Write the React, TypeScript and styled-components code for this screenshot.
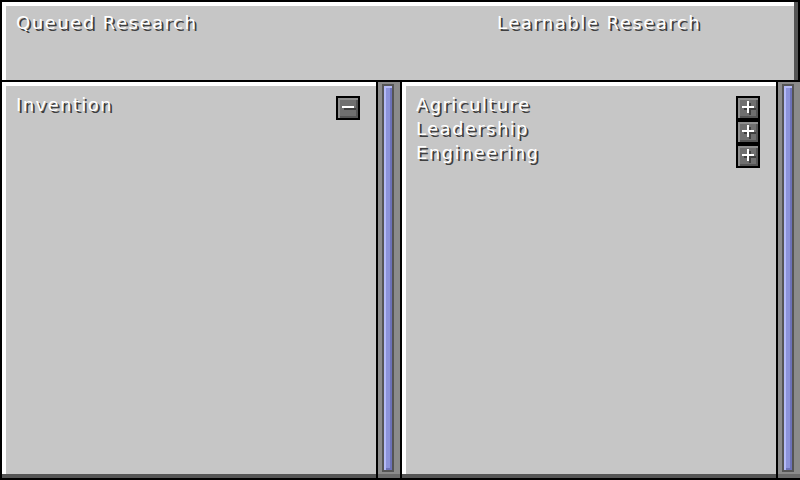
import styled, { createGlobalStyle } from "styled-components";

const GlobalStyle = createGlobalStyle`
  html, body {
    margin: 0;
    padding: 0;
    background: #000;
  }
  body {
    font-family: "DejaVu Sans", "Liberation Sans", sans-serif;
  }
`;

const Screen = styled.div`
  width: 800px;
  height: 480px;
  background: #000;
  display: flex;
  flex-direction: column;
  gap: 2px;
  overflow: hidden;
`;

const Header = styled.header`
  height: 80px;
  flex: none;
  box-sizing: border-box;
  display: grid;
  grid-template-columns: 384px 1fr;
  align-items: start;
  padding: 12px 0 0 14px;
  border: 2px solid #000;
  border-bottom: none;
  background: #c6c6c6;
  box-shadow: inset -4px 0 0 #555, inset 4px 4px 0 #fff;
`;

const Title = styled.h1<{ $align: "left" | "center" }>`
  margin: 0;
  font-size: 18px;
  line-height: 18px;
  font-weight: normal;
  letter-spacing: 1.5px;
  color: #fff;
  text-shadow: 2px 2px 0 #3f3f3f;
  text-align: ${(p) => p.$align};
`;

const Body = styled.div`
  flex: 1;
  min-height: 0;
  display: grid;
  grid-template-columns: 400px 400px;
`;

const Column = styled.section`
  display: flex;
  min-height: 0;
`;

const List = styled.ul`
  flex: 1;
  margin: 0;
  padding: 14px 16px 0 14px;
  list-style: none;
  display: flex;
  flex-direction: column;
  border-left: 2px solid #000;
  border-bottom: 2px solid #000;
  background: #c6c6c6;
  box-shadow: inset 0 -4px 0 #555, inset 4px 4px 0 #fff;
`;

const Row = styled.li`
  height: 24px;
  display: flex;
  align-items: flex-start;
  justify-content: space-between;
`;

const Label = styled.span`
  font-size: 18px;
  line-height: 18px;
  letter-spacing: 1.4px;
  color: #fff;
  text-shadow: 2px 2px 0 #3f3f3f;
  white-space: nowrap;
`;

const SquareButton = styled.button`
  width: 24px;
  height: 24px;
  flex: none;
  box-sizing: border-box;
  padding: 0 0 0 1px;
  margin: 0;
  border: 2px solid #000;
  background: #6f6f6f;
  box-shadow: inset 2px 2px 0 #8e8e8e, inset -2px -2px 0 #555;
  display: flex;
  align-items: center;
  justify-content: center;
  cursor: pointer;
`;

const Scrollbar = styled.div`
  width: 24px;
  flex: none;
  box-sizing: border-box;
  display: flex;
  padding: 2px 6px 6px 4px;
  border-left: 2px solid #000;
  border-bottom: 2px solid #000;
  background: #8b8b8b;
  box-shadow: inset 0 -4px 0 #6b6b6b;
`;

const Thumb = styled.div`
  flex: 1;
  border: 2px solid #555;
  background: #8c93da;
  box-shadow: inset 2px 2px 0 #b4baf6, inset -2px -2px 0 #6c72b9;
`;

function PlusIcon() {
  return (
    <svg width="14" height="14" viewBox="0 0 14 14">
      <rect x="2" y="7" width="12" height="2" fill="#3f3f3f" />
      <rect x="7" y="2" width="2" height="12" fill="#3f3f3f" />
      <rect x="0" y="5" width="12" height="2" fill="#fff" />
      <rect x="5" y="0" width="2" height="12" fill="#fff" />
    </svg>
  );
}

function MinusIcon() {
  return (
    <svg width="14" height="14" viewBox="0 0 14 14">
      <rect x="2" y="7" width="12" height="2" fill="#3f3f3f" />
      <rect x="0" y="5" width="12" height="2" fill="#fff" />
    </svg>
  );
}

const queued = ["Invention"];
const learnable = ["Agriculture", "Leadership", "Engineering"];

export default function App() {
  return (
    <>
      <GlobalStyle />
      <Screen>
        <Header>
          <Title $align="left">Queued Research</Title>
          <Title $align="center">Learnable Research</Title>
        </Header>
        <Body>
          <Column>
            <List>
              {queued.map((name) => (
                <Row key={name}>
                  <Label>{name}</Label>
                  <SquareButton aria-label={`Remove ${name}`}>
                    <MinusIcon />
                  </SquareButton>
                </Row>
              ))}
            </List>
            <Scrollbar>
              <Thumb />
            </Scrollbar>
          </Column>
          <Column>
            <List>
              {learnable.map((name) => (
                <Row key={name}>
                  <Label>{name}</Label>
                  <SquareButton aria-label={`Add ${name}`}>
                    <PlusIcon />
                  </SquareButton>
                </Row>
              ))}
            </List>
            <Scrollbar>
              <Thumb />
            </Scrollbar>
          </Column>
        </Body>
      </Screen>
    </>
  );
}
